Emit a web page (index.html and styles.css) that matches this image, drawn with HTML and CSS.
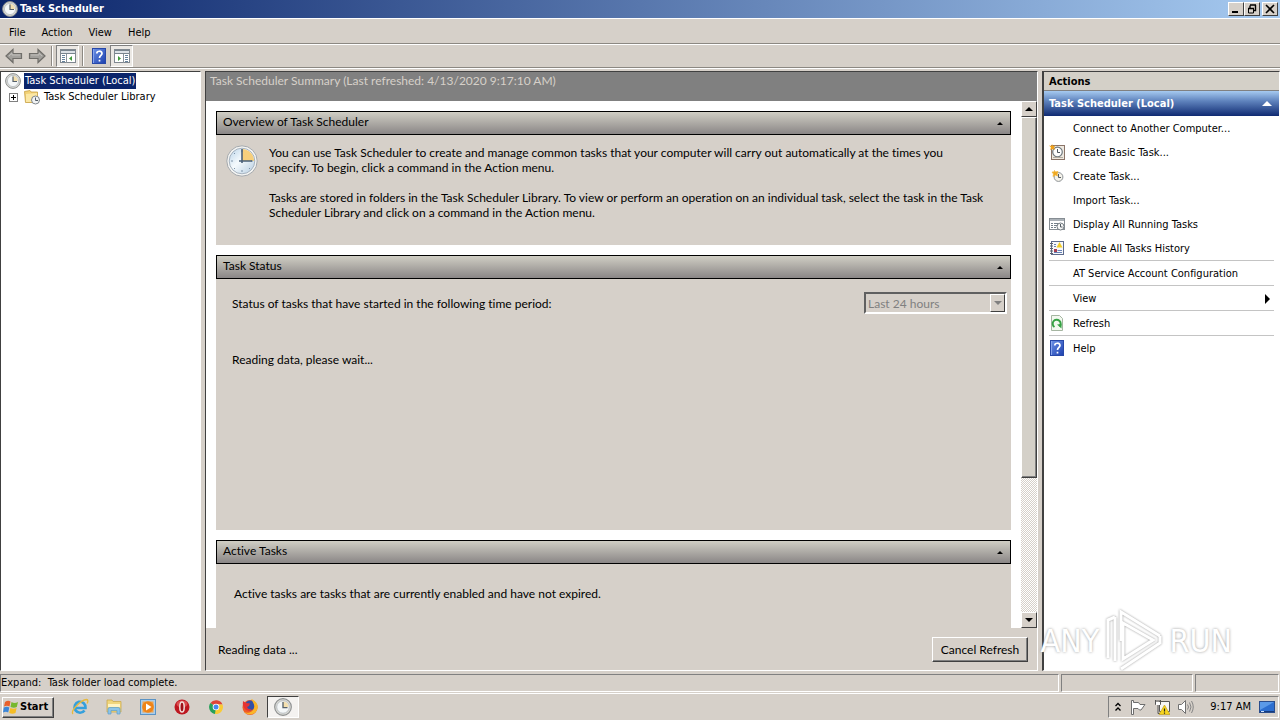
FILE: index.html
```
<!DOCTYPE html>
<html lang="en">
<head>
    <meta charset="UTF-8">
    <meta name="viewport" content="width=device-width, initial-scale=1.0">
    <title>Task Scheduler</title>
    <link rel="stylesheet" href="styles.css">
</head>
<body>

<!-- shared icons -->
<svg class="defs" aria-hidden="true">
    <defs>
        <linearGradient id="face" x1="0" y1="0" x2="1" y2="1">
            <stop offset="0" stop-color="#b9d3e8"/>
            <stop offset="0.45" stop-color="#f5fafd"/>
            <stop offset="1" stop-color="#b5cce0"/>
        </linearGradient>
        <linearGradient id="bluebook" x1="0" y1="0" x2="1" y2="1">
            <stop offset="0" stop-color="#6f94e8"/>
            <stop offset="1" stop-color="#1c3fae"/>
        </linearGradient>
        <symbol id="clock" viewBox="0 0 32 32">
            <circle cx="16" cy="16" r="15.2" fill="#f4f4f2" stroke="#a4a8ac" stroke-width="1"/>
            <circle cx="16" cy="16" r="12.8" fill="url(#face)" stroke="#a8b4c0"/>
            <path d="M16 16V4a12 12 0 0 1 12 12z" fill="#f6cf7c"/>
            <path d="M16 5v2M16 25v2M5 16h2M25 16h2M8 8l1 1M24 24l-1-1M8 24l1-1" stroke="#7d93a8"/>
            <path d="M16 4v14M13 16h13" stroke="#4a6078" stroke-width="1.6" fill="none"/>
        </symbol>
        <symbol id="smallclock" viewBox="0 0 16 16">
            <circle cx="8" cy="8" r="7.4" fill="#dcdcd6" stroke="#8c8f90" stroke-width="1"/>
            <circle cx="8" cy="8" r="5.6" fill="#f4f7f8" stroke="#b4babf" stroke-width="0.8"/>
            <path d="M8 8V3a5 5 0 0 1 5 5z" fill="#f3dfae"/>
            <path d="M8 3.5V8.5H12" stroke="#56616b" stroke-width="1.2" fill="none"/>
        </symbol>
        <symbol id="help" viewBox="0 0 14 16">
            <rect x="0.5" y="0.5" width="13" height="15" fill="url(#bluebook)" stroke="#2848a8"/>
            <path d="M1.5 1v14" stroke="#86a4ee"/>
            <path d="M4.8 5.4C4.8 2.6 10 2.4 10 5.4C10 7.4 7.5 7.4 7.5 10M7.5 11.7v1.8" stroke="#fff" stroke-width="1.7" fill="none"/>
        </symbol>
        <symbol id="arrow" viewBox="0 0 18 16">
            <path d="M1 8L8 1.5V5.5H16.5V10.5H8V14.5Z" fill="#a2a09c" stroke="#706e6a" stroke-width="1.2"/>
            <path d="M4 8L7 5.2V7H15" stroke="#c0beba" fill="none"/>
        </symbol>
        <symbol id="pane" viewBox="0 0 16 14">
            <rect x="0.5" y="0.5" width="15" height="13" fill="#fff" stroke="#808890"/>
            <path d="M1 1.5H15M1 4.5H15" stroke="#78848e"/>
            <path d="M1 3H15" stroke="#b9c4ce"/>
            <path d="M2 6.5H5M2 8.5H5M2 10.5H5M2 12.5H5" stroke="#66839d"/>
            <path d="M6.5 5v9" stroke="#8b949c"/>
            <path d="M12 7v5L9 9.5Z" fill="#3f9a3b"/>
        </symbol>
    </defs>
</svg>

<header class="titlebar">
    <svg class="icon16"><use href="#smallclock"/></svg>
    <h1>Task Scheduler</h1>
    <div class="window-buttons">
        <button type="button" aria-label="Minimize"><svg viewBox="0 0 12 10"><path d="M2 8h6" stroke="#000" stroke-width="2"/></svg></button>
        <button type="button" aria-label="Restore"><svg viewBox="0 0 12 10"><path d="M4 1h6M4 1.5V4M9.5 1v5.5H8M2 4.5h6" stroke="#000" fill="none" stroke-width="1.4"/><path d="M2.5 4v5h5V4" fill="none" stroke="#000"/></svg></button>
        <button type="button" class="close" aria-label="Close"><svg viewBox="0 0 12 10"><path d="M2 1l8 8M10 1l-8 8" stroke="#000" stroke-width="1.6"/></svg></button>
    </div>
</header>

<nav class="menubar">
    <button type="button">File</button>
    <button type="button">Action</button>
    <button type="button">View</button>
    <button type="button">Help</button>
</nav>

<div class="toolbar">
    <button type="button" aria-label="Back"><svg class="nav-arrow"><use href="#arrow"/></svg></button>
    <button type="button" aria-label="Forward"><svg class="nav-arrow flip"><use href="#arrow"/></svg></button>
    <span class="divider"></span>
    <button type="button" class="pressed" aria-label="Show or hide console tree"><svg class="pane-icon"><use href="#pane"/></svg></button>
    <span class="divider"></span>
    <button type="button" aria-label="Help"><svg class="book"><use href="#help"/></svg></button>
    <button type="button" class="pressed" aria-label="Show or hide action pane"><svg class="pane-icon flip"><use href="#pane"/></svg></button>
</div>

<main class="panes">
    <ul class="tree">
        <li>
            <svg class="icon16"><use href="#smallclock"/></svg>
            <a href="#" class="selected">Task Scheduler (Local)</a>
        </li>
        <li class="child">
            <svg class="expander" viewBox="0 0 9 9"><rect x="0.5" y="0.5" width="8" height="8" fill="#fff" stroke="#808080"/><path d="M2 4.5h5M4.5 2v5" stroke="#000"/></svg>
            <svg class="icon16" viewBox="0 0 16 16">
                <path d="M0.5 2.5L6 1.5L7 3H13.5V13.5H1.5Z" fill="#f3d277" stroke="#c79f43" stroke-width="0.8"/>
                <path d="M2 5L13 4V13H2Z" fill="#fbe7a4"/>
                <circle cx="11.5" cy="11" r="4" fill="#f1f3f4" stroke="#7f868c"/>
                <path d="M11.5 8.5V11.5H14" stroke="#535d66" fill="none"/>
            </svg>
            <a href="#">Task Scheduler Library</a>
        </li>
    </ul>

    <section class="summary">
        <h2 class="summary-title">Task Scheduler Summary (Last refreshed: 4/13/2020 9:17:10 AM)</h2>
        <div class="scroller">
            <div class="cards">
                <section class="card">
                    <h3>Overview of Task Scheduler <span class="tri up"></span></h3>
                    <div class="card-body overview">
                        <svg class="icon32"><use href="#clock"/></svg>
                        <div>
                            <p>You can use Task Scheduler to create and manage common tasks that your computer will carry out automatically at the times you<br>specify. To begin, click a command in the Action menu.</p>
                            <p>Tasks are stored in folders in the Task Scheduler Library. To view or perform an operation on an individual task, select the task in the Task<br>Scheduler Library and click on a command in the Action menu.</p>
                        </div>
                    </div>
                </section>
                <section class="card">
                    <h3>Task Status <span class="tri up"></span></h3>
                    <div class="card-body status">
                        <div class="period-row">
                            <label for="period">Status of tasks that have started in the following time period:</label>
                            <div class="combo">
                                <select id="period" disabled>
                                    <option>Last 24 hours</option>
                                </select>
                                <span class="combo-arrow"><span class="tri down"></span></span>
                            </div>
                        </div>
                        <p>Reading data, please wait...</p>
                    </div>
                </section>
                <section class="card">
                    <h3>Active Tasks <span class="tri up"></span></h3>
                    <div class="card-body active">
                        <p>Active tasks are tasks that are currently enabled and have not expired.</p>
                    </div>
                </section>
            </div>
            <div class="scrollbar">
                <button type="button" aria-label="Scroll up"><span class="tri up"></span></button>
                <div class="track"><div class="thumb"></div></div>
                <button type="button" aria-label="Scroll down"><span class="tri down"></span></button>
            </div>
        </div>
        <div class="summary-footer">
            <span>Reading data ...</span>
            <button type="button">Cancel Refresh</button>
        </div>
    </section>

    <aside class="actions">
        <h2>Actions</h2>
        <h3>Task Scheduler (Local) <span class="tri up"></span></h3>
        <ul>
            <li><a href="#">Connect to Another Computer...</a></li>
            <li>
                <svg class="icon16" viewBox="0 0 16 16">
                    <rect x="2.5" y="1.5" width="13" height="14" fill="#eee9e0" stroke="#8a7468"/>
                    <circle cx="8.5" cy="8" r="4.8" fill="#fff" stroke="#70797f" stroke-width="1.2"/>
                    <path d="M8.5 5V8.5H11" stroke="#4c565e" fill="none"/>
                    <path d="M4 13.5H14" stroke="#b4aca0"/>
                    <path d="M3 0L4 2L6.5 1.5L5 3.5L6 6L3.5 5L1 6L2 3.5L0 1.5L2.5 2Z" fill="#f0a21c"/>
                </svg>
                <a href="#">Create Basic Task...</a>
            </li>
            <li>
                <svg class="icon16" viewBox="0 0 16 16">
                    <circle cx="9.5" cy="9" r="4.4" fill="#f4f2ea" stroke="#8d9296"/>
                    <path d="M9.5 6V9.5H12" stroke="#555d64" fill="none"/>
                    <path d="M5.5 2.5L6.5 4L9 3.5L8 6L8.500 8L6.5 7L4 8.5L4.5 6L3 4L5 4Z" fill="#f0a81f" stroke="#f0b83f" stroke-width="0.8"/>
                </svg>
                <a href="#">Create Task...</a>
            </li>
            <li><a href="#">Import Task...</a></li>
            <li>
                <svg class="icon16" viewBox="0 0 16 16">
                    <rect x="0.5" y="2.5" width="15" height="11" fill="#fff" stroke="#868d93"/>
                    <path d="M1 4H15" stroke="#aab1b7" stroke-width="2"/>
                    <path d="M2 7.5H4M5 7.5H9M2 9.5H4M5 9.5H8M2 11.5H4M5 11.5H7" stroke="#75818b"/>
                    <circle cx="11.5" cy="10.5" r="3.5" fill="#f7f8f8" stroke="#747c82"/>
                    <path d="M11.5 8V11H13.5" stroke="#555d64" fill="none"/>
                </svg>
                <a href="#">Display All Running Tasks</a>
            </li>
            <li>
                <svg class="icon16" viewBox="0 0 16 16">
                    <rect x="2.5" y="1.5" width="12" height="13" fill="#f6f7fa" stroke="#5d6b8c"/>
                    <path d="M1 3.5H4M1 6H4M1 8.5H4M1 11H4M1 13.5H4" stroke="#59606b"/>
                    <path d="M10.5 2L13.5 7.5H7.5Z" fill="#f1cc24"/>
                    <path d="M5 4.5H7M5 6.5H7M8.5 10.5H13M5 12.5H13" stroke="#6681b5"/>
                    <rect x="5" y="9" width="3" height="3" fill="#a63d50"/>
                </svg>
                <a href="#">Enable All Tasks History</a>
            </li>
            <li class="ruled"><a href="#">AT Service Account Configuration</a></li>
            <li class="ruled"><a href="#">View <span class="tri right"></span></a></li>
            <li class="ruled">
                <svg class="icon16" viewBox="0 0 16 16">
                    <path d="M2.5 0.5H10.5L13.5 3.5V15.5H2.5Z" fill="#f2f8ef" stroke="#a5b5a1"/>
                    <path d="M5.5 12A4 4 0 1 1 10.5 11.5" fill="none" stroke="#35a143" stroke-width="2"/>
                    <path d="M8 9.5L12.5 9V13.5Z" fill="#35a143"/>
                </svg>
                <a href="#">Refresh</a>
            </li>
            <li class="ruled">
                <svg class="icon16"><use href="#help"/></svg>
                <a href="#">Help</a>
            </li>
        </ul>
    </aside>
</main>

<div class="statusbar">
    <div>Expand:&nbsp; Task folder load complete.</div>
    <div></div>
    <div></div>
</div>

<footer class="taskbar">
    <button type="button" class="start">
        <svg viewBox="0 0 16 16">
            <path d="M2 3Q5 1 7.5 2.5L6.5 7.5Q4 6 1 7.5Z" fill="#e8602c"/>
            <path d="M8.5 3Q11.5 5 15 3L13.8 8Q11 9.5 7.5 8Z" fill="#76b82e"/>
            <path d="M0.8 8.5Q4 7 6.3 8.5L5.2 13.5Q3 12 0 13.5Z" fill="#3b86d8"/>
            <path d="M7.3 9Q10.5 10.5 13.6 9L12.5 14Q9.5 15.5 6.2 14Z" fill="#f5bd25"/>
        </svg>
        Start
    </button>
    <div class="launchers">
        <button type="button" aria-label="Internet Explorer">
            <svg viewBox="0 0 18 18">
                <path d="M4 10H14.5A5.5 5.5 0 1 0 13.5 12.5" fill="none" stroke="#35a0dc" stroke-width="2.7"/>
                <path d="M2 16C-1 13 10 2 15.5 1.5C17.5 1.5 17 4 16 5.5" fill="none" stroke="#e7b93d" stroke-width="1.3"/>
            </svg>
        </button>
        <button type="button" aria-label="Windows Explorer">
            <svg viewBox="0 0 18 18">
                <path d="M2 2H7L8 3.5H16V14H2Z" fill="#f0d67d" stroke="#cbaa4f" stroke-width="0.8"/>
                <path d="M3 6H15V9H3Z" fill="#fff3c2"/>
                <path d="M3 16V11Q3 9.5 5 9.5H13Q15 9.5 15 11V16H12V12.5H6V16Z" fill="#8cc4e8" stroke="#5c9fcb" stroke-width="0.7"/>
            </svg>
        </button>
        <button type="button" aria-label="Media Player">
            <svg viewBox="0 0 18 18">
                <rect x="1.5" y="1.5" width="15" height="15" fill="#a9cdec" stroke="#5b93c4"/>
                <rect x="3.5" y="3.5" width="11" height="11" fill="#f4a34a"/>
                <circle cx="9" cy="9" r="5.8" fill="#ee8419"/>
                <path d="M7 5.5V12.5L12.5 9Z" fill="#fff"/>
            </svg>
        </button>
        <button type="button" aria-label="Opera">
            <svg viewBox="0 0 18 18">
                <circle cx="9" cy="9" r="7.5" fill="#bd1720"/>
                <ellipse cx="9" cy="6" rx="5.5" ry="3.5" fill="#db4c4e"/>
                <ellipse cx="9" cy="9" rx="2.2" ry="5" fill="#a01018" stroke="#f0e0dc" stroke-width="1.5"/>
            </svg>
        </button>
        <button type="button" aria-label="Chrome">
            <svg viewBox="0 0 18 18">
                <path d="M9 9L3.4 5A7 7 0 0 1 15.5 6.5H9Z" fill="#de4437"/>
                <path d="M9 9L3.4 5A7 7 0 0 0 8 16L11 11Z" fill="#27a05a"/>
                <path d="M9 9V6.5H15.5A7 7 0 0 1 8 16Z" fill="#f9cb35"/>
                <circle cx="9" cy="9" r="3.3" fill="#fff"/>
                <circle cx="9" cy="9" r="2.5" fill="#4688ee"/>
            </svg>
        </button>
        <button type="button" aria-label="Firefox">
            <svg viewBox="0 0 18 18">
                <circle cx="9" cy="9.5" r="7.5" fill="#ef5a25"/>
                <circle cx="9" cy="7.5" r="5" fill="#3250a7"/>
                <path d="M10 1C16 3 18 8 16 12C14 17 7 18 3 14C7 16 12 14 13 10C14 7 12 4 10 1Z" fill="#f9b62a"/>
                <path d="M2 3L5 5L9 5.5L8 8L6 9Q7 12 11 11Q9 14 5 12Q1 9 2 3Z" fill="#e73333"/>
            </svg>
        </button>
        <button type="button" class="running" aria-label="Task Scheduler"><svg><use href="#smallclock"/></svg></button>
    </div>
    <div class="tray">
        <svg class="chevrons" viewBox="0 0 8 10"><path d="M1.5 4L4 1.5L6.5 4M1.5 8.5L4 6L6.5 8.5" fill="none" stroke="#000" stroke-width="1.3"/></svg>
        <svg viewBox="0 0 16 16"><path d="M1.5 1.5V15.5H3.5V9.5H8L9.5 11H11L15 5.5H10L8.5 3.5H3.5V1.5Z" fill="#fff" stroke="#6d6d6d"/></svg>
        <svg viewBox="0 0 16 16">
            <path d="M5.5 2.5H15.5V12.5H5.5Z" fill="#f5f5f5" stroke="#555"/>
            <path d="M1.5 1V5.5H6.5V1M3 1V4M5 1V4M4 6V14.5H9" fill="none" stroke="#555"/>
            <path d="M2 3H6V6H2Z" fill="#fff"/>
            <path d="M10.5 6L16 15.5H5Z" fill="#f7d51e" stroke="#b99712" stroke-width="0.6"/>
            <path d="M10.5 9.5V12.5M10.5 13.5V14.7" stroke="#222" stroke-width="1.2"/>
        </svg>
        <svg viewBox="0 0 16 16">
            <path d="M0.5 5.5H3.5L7.5 1.5V14.5L3.5 10.5H0.5Z" fill="#fff" stroke="#707070"/>
            <path d="M9.5 5.5Q11.5 8 9.5 10.5M11.5 3.5Q14.5 8 11.5 12.5M13.5 2Q17 8 13.5 14" fill="none" stroke="#858585"/>
        </svg>
        <time>9:17 AM</time>
        <svg class="desktop" viewBox="0 0 16 14">
            <rect x="0.5" y="1.5" width="15" height="11" fill="#2d6fd0" stroke="#2a4d8c"/>
            <path d="M1 2H15L1 10Z" fill="#5b9ae8"/>
            <path d="M1 11.5H15" stroke="#153a7c"/>
            <path d="M2 11.5H5" stroke="#cce2ff"/>
        </svg>
    </div>
</footer>

<div class="watermark" aria-hidden="true">
    <span>ANY</span>
    <svg viewBox="0 0 58 64">
        <path d="M10 8L3 11V49"/>
        <path d="M10 8V52"/>
        <path d="M16 32V3L55 27"/>
        <path d="M18 14L48 31L18 50Z"/>
        <path d="M16 60L55 34V27"/>
    </svg>
    <span>RUN</span>
</div>

</body>
</html>
```
FILE: styles.css
```
* {
    box-sizing: border-box;
}

body {
    margin: 0;
    height: 100vh;
    display: flex;
    flex-direction: column;
    overflow: hidden;
    background-color: #d6d0c9;
    color: #000;
    font-family: "DejaVu Sans Condensed", Tahoma, sans-serif;
    font-size: 11px;
    font-variant-ligatures: none;
    line-height: 16px;
}

h1, h2, h3, p, ul {
    margin: 0;
    padding: 0;
    font-size: inherit;
    font-weight: normal;
}

ul {
    list-style-type: none;
}

a {
    color: inherit;
    text-decoration: none;
}

button {
    margin: 0;
    padding: 0;
    border: 0;
    background: none;
    color: inherit;
    font: inherit;
}

svg {
    display: block;
    flex: none;
}

.defs {
    position: absolute;
    width: 0;
    height: 0;
}

.icon16 {
    width: 16px;
    height: 16px;
}

.icon32 {
    width: 32px;
    height: 32px;
}

.flip {
    transform: scaleX(-1);
}

/* triangles */
.tri {
    width: 0;
    height: 0;
    flex: none;
    border: 3px solid transparent;
}

.tri.up {
    border-top: 0;
    border-bottom-color: #000;
}

.tri.down {
    border-bottom: 0;
    border-top-color: #000;
}

.tri.right {
    border-width: 5px;
    border-right: 0;
    border-left-color: #000;
}

/* title bar */
.titlebar {
    flex: none;
    display: flex;
    align-items: center;
    gap: 2px;
    height: 18px;
    padding: 0 2px;
    background: linear-gradient(to right, #0a246a, #a6caf0);
    color: #fff;
}

.titlebar h1 {
    flex: 1;
    font-weight: bold;
}

.window-buttons {
    display: flex;
}

.window-buttons button {
    width: 16px;
    height: 14px;
    background-color: #d6d0c9;
    border: 1px solid;
    border-color: #fff #404040 #404040 #fff;
}

.window-buttons .close {
    margin-left: 2px;
}

.window-buttons svg {
    width: 12px;
    height: 10px;
    margin: 0 auto;
}

/* menu and toolbar */
.menubar {
    flex: none;
    display: flex;
    align-items: center;
    height: 26px;
    padding: 3px 0 0 1px;
    border-top: 1px solid #fff;
    border-bottom: 1px solid #8c8882;
}

.menubar button {
    padding: 0 8px;
}

.toolbar {
    flex: none;
    display: flex;
    align-items: center;
    height: 24px;
    padding-left: 2px;
    border-top: 1px solid #fff;
    border-bottom: 1px solid #8c8882;
}

.toolbar button {
    display: flex;
    align-items: center;
    justify-content: center;
    width: 23px;
    height: 22px;
}

.toolbar .pressed {
    border: 1px solid;
    border-color: #808080 #fff #fff #808080;
    background-color: #ebe8e4;
}

.divider {
    width: 2px;
    height: 20px;
    margin: 0 3px;
    border-left: 1px solid #8c8882;
    border-right: 1px solid #fff;
}

.nav-arrow {
    width: 18px;
    height: 16px;
}

.pane-icon {
    width: 16px;
    height: 14px;
}

.book {
    width: 14px;
    height: 16px;
}

/* panes */
.panes {
    flex: 1;
    min-height: 0;
    display: grid;
    grid-template-rows: minmax(0, 1fr);
    grid-template-columns: 201px 1fr 238px;
    gap: 4px;
    padding-top: 2px;
    border-top: 1px solid #fff;
}

.tree,
.summary,
.actions {
    min-width: 0;
    border: 1px solid;
    border-color: #404040 #fff #fff #404040;
}

.tree {
    padding: 1px 0 0 4px;
    background-color: #fff;
}

.tree li {
    display: flex;
    align-items: center;
    height: 16px;
    gap: 3px;
}

.tree .child {
    padding-left: 4px;
}

.tree a {
    padding: 0 1px;
}

.tree .selected {
    background-color: #0a246a;
    color: #fff;
}

.expander {
    width: 9px;
    height: 9px;
    margin-right: 3px;
}

.summary {
    display: flex;
    flex-direction: column;
    font-family: Lato, "Segoe UI", sans-serif;
    font-size: 12px;
    line-height: 15px;
}

.summary-title {
    flex: none;
    height: 29px;
    padding: 1px 4px;
    background-color: #808080;
    color: #d6d0c9;
}

.scroller {
    flex: 1;
    min-height: 0;
    display: flex;
    background-color: #fff;
}

.cards {
    flex: 1;
    overflow: hidden;
    padding: 10px;
}

.card {
    margin-bottom: 10px;
    background-color: #d6d0c9;
}

.card h3 {
    display: flex;
    align-items: center;
    justify-content: space-between;
    height: 24px;
    padding: 0 7px 3px 6px;
    border: 1px solid #000;
    background: linear-gradient(#d0cec4, #8a8686);
}

.card h3 .tri {
    margin-top: 3px;
}

.overview {
    display: flex;
    align-items: flex-start;
    gap: 11px;
    height: 110px;
    padding: 10px;
}

.overview p {
    margin-bottom: 15px;
    white-space: nowrap;
}

.status {
    height: 251px;
    padding: 13px 4px 0 16px;
}

.period-row {
    display: flex;
    align-items: center;
    justify-content: space-between;
    margin-bottom: 38px;
}

.combo {
    position: relative;
}

.combo select {
    display: block;
    width: 143px;
    height: 22px;
    padding: 0 2px;
    appearance: none;
    border: 2px solid;
    border-color: #606060 #fff #fff #606060;
    border-radius: 0;
    background-color: #d6d0c9;
    color: #808080;
    opacity: 1;
    font: inherit;
}

.combo-arrow {
    position: absolute;
    top: 2px;
    right: 2px;
    display: flex;
    align-items: center;
    justify-content: center;
    width: 15px;
    height: 18px;
    border: 1px solid;
    border-color: #fff #404040 #404040 #fff;
    pointer-events: none;
}

.combo-arrow .tri {
    border-width: 4px 4px 0;
    border-top-color: #808080;
}

.active {
    height: 120px;
    padding: 22px 18px;
}

.scrollbar {
    display: flex;
    flex-direction: column;
    width: 16px;
}

.scrollbar button {
    display: flex;
    align-items: center;
    justify-content: center;
    height: 16px;
    background-color: #d6d0c9;
    border: 1px solid;
    border-color: #fff #404040 #404040 #fff;
}

.scrollbar .tri {
    border-left-width: 4px;
    border-right-width: 4px;
}

.scrollbar .tri.up {
    border-bottom-width: 4px;
}

.scrollbar .tri.down {
    border-top-width: 4px;
}

.track {
    flex: 1;
    background: repeating-conic-gradient(#d6d0c9 0 25%, #fff 0 50%) 0 0 / 2px 2px;
}

.thumb {
    height: 73%;
    background-color: #d4d0c8;
    border: 1px solid;
    border-color: #fff #404040 #404040 #fff;
    box-shadow: inset -1px -1px #808080;
}

.summary-footer {
    flex: none;
    display: flex;
    align-items: center;
    justify-content: space-between;
    height: 42px;
    padding: 0 9px 0 12px;
}

.summary-footer button {
    width: 96px;
    height: 25px;
    border: 1px solid;
    border-color: #fff #404040 #404040 #fff;
    box-shadow: inset -1px -1px #808080;
}

/* actions */
.actions {
    border-left-width: 2px;
    background-color: #fff;
}

.actions h2 {
    height: 19px;
    padding: 2px 5px;
    background-color: #d4d0c8;
    border-bottom: 1px solid #808080;
    font-weight: bold;
}

.actions h3 {
    display: flex;
    align-items: center;
    justify-content: space-between;
    height: 25px;
    padding: 0 7px 0 5px;
    background: linear-gradient(#a6caf0, #5f83bd 40%, #0f2a72);
    color: #fff;
    font-weight: bold;
}

.actions h3 .tri {
    border-width: 0 5px 5px;
    border-bottom-color: #fff;
}

.actions ul {
    padding: 0 5px;
}

.actions li {
    display: flex;
    align-items: center;
    gap: 8px;
    height: 24px;
}

.actions li a {
    flex: 1;
    display: flex;
    align-items: center;
    justify-content: space-between;
    padding: 2px 4px 0 0;
}

.actions li a:first-child {
    padding-left: 24px;
}

.actions .ruled {
    height: 25px;
    border-top: 1px solid #c4c4c4;
}

/* status bar */
.statusbar {
    flex: none;
    display: grid;
    grid-template-columns: 1fr 132px 84px;
    gap: 2px;
    height: 22px;
    padding: 3px 1px 1px 0;
}

.statusbar div {
    border: 1px solid;
    border-color: #808080 #fff #fff #808080;
}

/* taskbar */
.taskbar {
    flex: none;
    display: flex;
    align-items: center;
    height: 27px;
    padding: 0 1px 0 2px;
    border-top: 1px solid #fff;
}

.start {
    display: flex;
    align-items: center;
    gap: 1px;
    width: 52px;
    height: 21px;
    border: 1px solid;
    border-color: #fff #404040 #404040 #fff;
    box-shadow: inset -1px -1px #808080;
    font-weight: bold;
}

.start svg {
    width: 16px;
    height: 16px;
}

.launchers {
    flex: 1;
    display: flex;
    padding-left: 9px;
}

.launchers button {
    display: flex;
    align-items: center;
    justify-content: center;
    width: 34px;
    height: 22px;
}

.launchers svg {
    width: 18px;
    height: 18px;
}

.launchers .running {
    width: 32px;
    border: 1px solid;
    border-color: #404040 #fff #fff #404040;
    background-color: #f4f2f0;
}

.tray {
    display: flex;
    align-items: center;
    gap: 8px;
    height: 22px;
    padding: 0 3px 0 5px;
    border: 1px solid;
    border-color: #808080 #fff #fff #808080;
}

.tray svg {
    width: 16px;
    height: 16px;
}

.tray .chevrons {
    width: 8px;
    height: 10px;
}

.tray time {
    margin-left: 8px;
}

/* watermark */
.watermark {
    position: absolute;
    right: 48px;
    bottom: 47px;
    display: flex;
    align-items: center;
    gap: 6px;
    color: #fff;
    font-size: 32px;
    line-height: 40px;
    text-shadow: 0 0 3px #999;
    pointer-events: none;
}

.watermark svg {
    width: 58px;
    height: 64px;
    fill: none;
    stroke: #fff;
    stroke-width: 3;
    filter: drop-shadow(0 0 1px #999);
}
```
